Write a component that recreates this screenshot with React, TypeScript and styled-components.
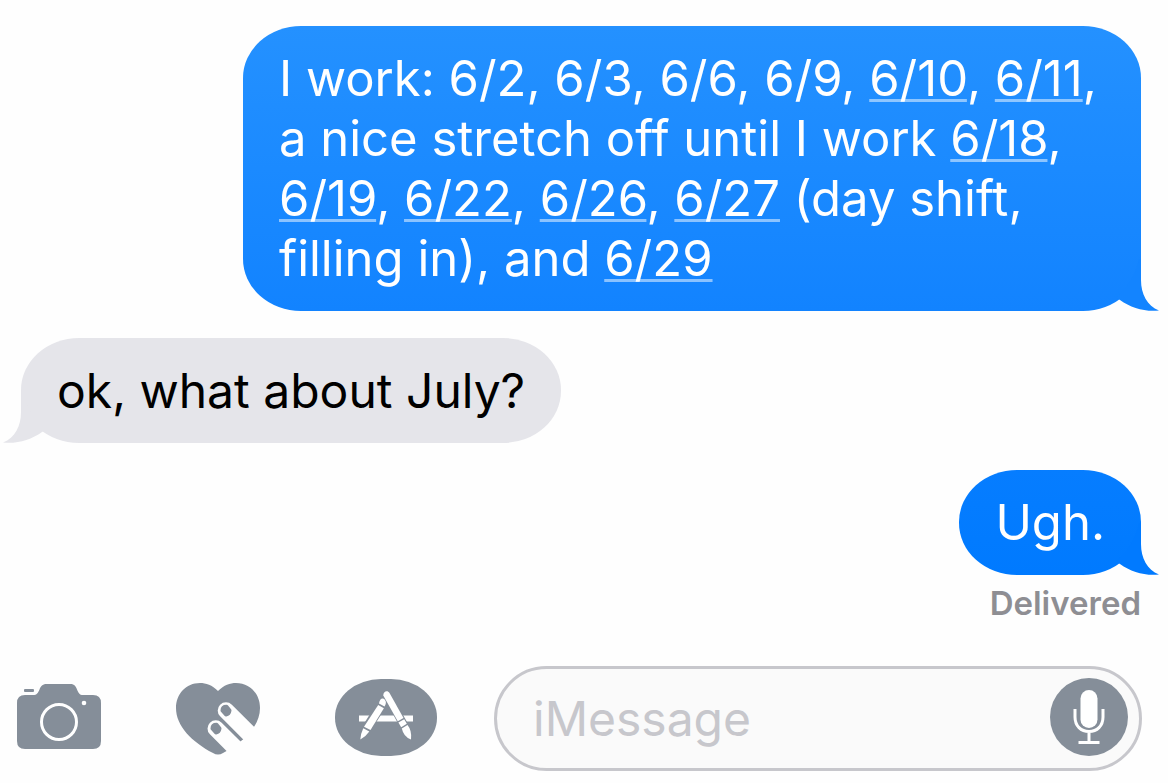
import React from "react";
import styled, { createGlobalStyle, css } from "styled-components";

const GlobalStyle = createGlobalStyle`
  *, *::before, *::after { box-sizing: border-box; }
  body {
    margin: 0;
    background: #fefefe;
    font-family: Inter, "Liberation Sans", sans-serif;
  }
`;

const slate = "#858e99";

const Screen = styled.main`
  display: flex;
  flex-direction: column;
  gap: 43px;
  padding: 26px 0 12px;
`;

const Thread = styled.ol`
  display: flex;
  flex-direction: column;
  gap: 27px;
  margin: 0;
  padding: 0 27px 0 21px;
  list-style: none;
`;

const Message = styled.li<{ $sent?: boolean }>`
  display: flex;
  flex-direction: column;
  align-items: ${(p) => (p.$sent ? "flex-end" : "flex-start")};
`;

const Bubble = styled.div<{ $sent?: boolean; $wide?: boolean; $from: string; $to: string }>`
  position: relative;
  width: ${(p) => (p.$wide ? "min(100%, 898px)" : "auto")};
  max-width: 100%;
  padding: 23px 36px 22px;
  border-radius: 58px / 52px;
  background: linear-gradient(${(p) => p.$from}, ${(p) => p.$to});
  color: ${(p) => (p.$sent ? "#fff" : "#000")};
  font-size: ${(p) => (p.$sent ? 49 : 48)}px;
  line-height: 60px;
`;

const Copy = styled.p`
  margin: 0;
`;

const TailShape = styled.svg<{ $sent?: boolean; $fill: string }>`
  position: absolute;
  bottom: 0;
  width: 60px;
  height: 52px;
  fill: ${(p) => p.$fill};
  ${(p) =>
    p.$sent
      ? css`
          right: -18px;
        `
      : css`
          left: -18px;
          transform: scaleX(-1);
        `}
`;

const DateLink = styled.a`
  color: inherit;
  text-decoration: underline 3px rgba(255, 255, 255, 0.5);
  text-underline-offset: 3px;
`;

const Status = styled.span`
  margin-top: 8px;
  color: #8e8e93;
  font-size: 33px;
  font-weight: 600;
  line-height: 40px;
`;

const Composer = styled.form`
  display: flex;
  align-items: center;
  gap: 57px;
  padding: 0 26px 0 17px;
`;

const Tools = styled.div`
  display: flex;
  align-items: center;
  gap: 75px;
  padding-bottom: 3px;
`;

const ToolButton = styled.button`
  display: flex;
  padding: 0;
  border: 0;
  background: none;
  color: ${slate};
`;

const AppsButton = styled(ToolButton)`
  align-items: center;
  justify-content: center;
  width: 102px;
  height: 77px;
  border-radius: 46px / 38px;
  background: ${slate};
  color: #fff;
`;

const Field = styled.div`
  display: flex;
  flex: 1;
  align-items: center;
  min-width: 0;
  padding: 9px 11px 12px 36px;
  border: 3px solid #c7c7cc;
  border-radius: 53px;
  background: #fafafa;
`;

const MessageInput = styled.input`
  flex: 1;
  min-width: 0;
  padding: 4px 0 0;
  border: 0;
  outline: 0;
  background: none;
  color: #000;
  font: inherit;
  font-size: 48px;
  line-height: 60px;
  &::placeholder {
    color: #c7c7cc;
    opacity: 1;
  }
`;

const MicButton = styled(ToolButton)`
  align-items: center;
  justify-content: center;
  width: 78px;
  height: 78px;
  border-radius: 50%;
  background: ${slate};
  color: #fff;
`;

function Tail({ sent, fill }: { sent?: boolean; fill: string }) {
  return (
    <TailShape $sent={sent} $fill={fill} viewBox="0 0 60 52" aria-hidden="true">
      <path d="M42 0V21C42 35 48 47 60 51.500C46 53 32 49 21 41L17 38C28 30 37 16 40 0Z" />
    </TailShape>
  );
}

function Day({ children }: { children: string }) {
  return <DateLink href={"#" + children}>{children}</DateLink>;
}

function CameraIcon() {
  return (
    <svg width="84" height="66" viewBox="0 0 84 66" aria-hidden="true">
      <path
        fill="currentColor"
        d="M8 11H16C20 11 21 9 22.500 5.500C24 1.500 26 0 30 0H53C57 0 58.500 1.500 60 5.500C61.500 9 62.500 11 66 11H76Q84 11 84 19V57Q84 65 76 65H8Q0 65 0 57V19Q0 11 8 11Z"
      />
      <rect x="7" y="5" width="10" height="3" rx="1" fill="currentColor" />
      <circle cx="42" cy="38" r="17.500" fill="none" stroke="#fff" strokeWidth="3" />
      <circle cx="67" cy="19" r="2.300" fill="#fff" />
    </svg>
  );
}

function HeartIcon() {
  return (
    <svg width="84" height="76" viewBox="0 -4 84 76" aria-hidden="true">
      <path
        fill="currentColor"
        d="M42 8C36 2 30 0 24 0C10 0 0 11 0 25C0 43 16 59 37 70Q42 73 47 70C68 59 84 43 84 25C84 11 74 0 60 0C54 0 48 2 42 8Z"
      />
      <path fill="none" stroke="#fefefe" strokeWidth="16.600" strokeLinecap="round" d="M50 27.500L90 67.500M39.800 45.500L72 77.700" />
      <path fill="#fefefe" d="M62 61.500L66.500 57L84 60V72H66Z" />
      <g fill="currentColor" stroke="currentColor" strokeWidth="4" strokeLinejoin="round">
        <path d="M46.500 27.500Q46.500 23.800 50.500 23.800L53.500 27.500Q53 31 50 31.500Z" />
        <path d="M36.500 45.500Q36.500 41.800 40.500 41.800L43.500 45.500Q43 49 40 49.500Z" />
      </g>
    </svg>
  );
}

function AppsIcon() {
  return (
    <svg width="54" height="50" viewBox="0 0 54 50" overflow="visible" aria-hidden="true">
      <path fill="currentColor" d="M0 23.500H54V29.500H0Z" />
      <g fill={slate} stroke={slate} strokeWidth="2.400">
        <path d="M20 10Q22 5 26 8Q27.500 11 25 16L10.500 38.500L1.300 47.500L4 35.500Z" />
        <path d="M24.300 2Q26.500 -2 30 0L45 27L49 34Q53 41 52 47.500Q45.500 45 43.500 36.500L39 29Z" />
      </g>
      <g fill="currentColor">
        <path d="M20 11.500C20.500 6.500 24 5 26 8C27.500 10 27 12 25.500 14.500Z" />
        <path d="M19.200 13L24.900 16.200L11.500 38L5 34.800Z" />
        <path d="M4.300 36.200L10.300 39.500Q7 44.500 1.300 47.500Q1.500 42 4.300 36.200Z" />
        <path d="M24.300 3.500C24 -0.500 28.500 -2.500 30.500 1L44.500 26L38.800 29.200Z" />
        <path d="M39.400 30.400L45.200 27.200L47.800 31.800L42.200 35.200Z" />
        <path d="M42.800 36.400L48.500 33.100Q53 38.500 52 47.500Q44.500 44.500 42.800 36.400Z" />
      </g>
    </svg>
  );
}

function MicIcon() {
  return (
    <svg width="32" height="56" viewBox="0 0 32 56" aria-hidden="true">
      <rect x="7.500" y="1" width="17" height="38" rx="8.500" fill="currentColor" />
      <path fill="none" stroke="currentColor" strokeWidth="3" d="M2 20V28C2 37 8 42.500 16 42.500C24 42.500 30 37 30 28V20M16 42V54M5.500 53.500H26.500" />
    </svg>
  );
}

export default function App() {
  return (
    <>
      <GlobalStyle />
      <Screen>
        <Thread>
          <Message $sent>
            <Bubble $sent $wide $from="#2491ff" $to="#1283ff">
              <Copy>
                I work: 6/2, 6/3, 6/6, 6/9, <Day>6/10</Day>, <Day>6/11</Day>,<br />
                a nice stretch off until I work <Day>6/18</Day>,<br />
                <Day>6/19</Day>, <Day>6/22</Day>, <Day>6/26</Day>, <Day>6/27</Day> (day shift,<br />
                filling in), and <Day>6/29</Day>
              </Copy>
              <Tail sent fill="#1384ff" />
            </Bubble>
          </Message>
          <Message>
            <Bubble $from="#e5e5ea" $to="#e5e5ea">
              <Copy>ok, what about July?</Copy>
              <Tail fill="#e5e5ea" />
            </Bubble>
          </Message>
          <Message $sent>
            <Bubble $sent $from="#067dff" $to="#007aff">
              <Copy>Ugh.</Copy>
              <Tail sent fill="#017aff" />
            </Bubble>
            <Status>Delivered</Status>
          </Message>
        </Thread>
        <Composer onSubmit={(e) => e.preventDefault()}>
          <Tools>
            <ToolButton type="button" aria-label="Camera"><CameraIcon /></ToolButton>
            <ToolButton type="button" aria-label="Digital Touch"><HeartIcon /></ToolButton>
            <AppsButton type="button" aria-label="Apps"><AppsIcon /></AppsButton>
          </Tools>
          <Field>
            <MessageInput type="text" aria-label="Message" placeholder="iMessage" />
            <MicButton type="button" aria-label="Record audio"><MicIcon /></MicButton>
          </Field>
        </Composer>
      </Screen>
    </>
  );
}
